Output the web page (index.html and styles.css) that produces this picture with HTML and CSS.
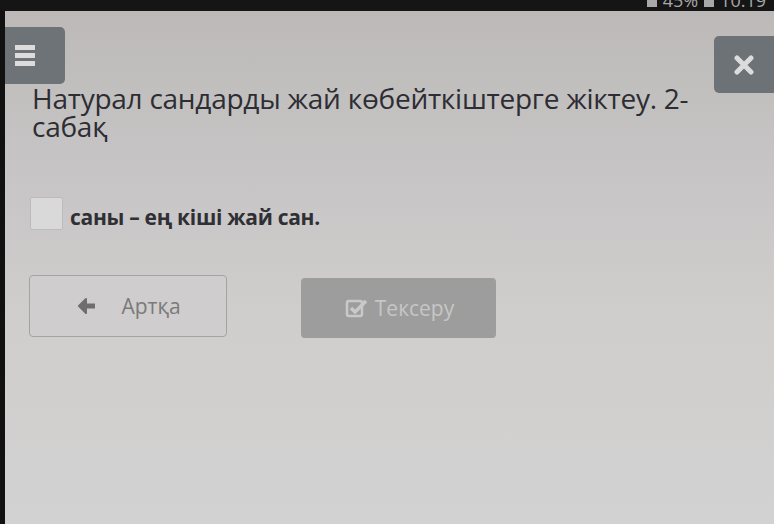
FILE: index.html
```html
<!DOCTYPE html>
<html lang="kk">
<head>
<meta charset="utf-8">
<link rel="stylesheet" href="styles.css">
</head>
<body>
<div class="status"><span class="status-text"><span class="bat"></span> 45% <span class="bat"></span> 10:19</span></div>
<div class="screen">
  <div class="topbar">
    <button class="menu-btn" aria-label="menu">
      <svg width="20" height="22" viewBox="0 0 20 22"><rect x="0" y="0" width="20" height="5" fill="#dcdcdc"/><rect x="0" y="8" width="20" height="5" fill="#dcdcdc"/><rect x="0" y="16" width="20" height="5" fill="#dcdcdc"/></svg>
    </button>
    <button class="close-btn" aria-label="close">
      <svg width="20" height="20" viewBox="0 0 20 20"><path d="M3 3 L17 17 M17 3 L3 17" stroke="#dcdcdc" stroke-width="5" stroke-linecap="round"/></svg>
    </button>
  </div>
  <h1 class="title">Натурал сандарды жай көбейткіштерге жіктеу. 2-<br>сабақ</h1>
  <div class="question">
    <span class="box"></span>
    <span class="q-text">саны – ең кіші жай сан.</span>
  </div>
  <div class="actions">
    <button class="btn back">
      <svg width="20" height="16" viewBox="0 0 20 16"><path d="M9 1 L2 8 L9 15 Z" fill="#6e6e6e" stroke="#6e6e6e" stroke-width="2" stroke-linejoin="round"/><path d="M6 8 H18" stroke="#6e6e6e" stroke-width="5"/></svg>
      <span>Артқа</span>
    </button>
    <button class="btn check">
      <svg width="24" height="20" viewBox="0 0 24 20"><rect x="2" y="3" width="15" height="15" rx="2" stroke="#c9c9c9" stroke-width="2.5" fill="none"/><path d="M6 10 L10 14 L21 3" stroke="#c9c9c9" stroke-width="3.5" fill="none"/></svg>
      <span>Тексеру</span>
    </button>
  </div>
</div>
</body>
</html>
```
FILE: styles.css
```css
html, body { margin: 0; padding: 0; }
body {
  width: 774px;
  height: 524px;
  overflow: hidden;
  background: #111;
  font-family: "Open Sans", "Noto Sans", sans-serif;
  position: relative;
}
.status {
  height: 11px;
  background: #151515;
  position: relative;
  overflow: hidden;
}
.status-text {
  position: absolute;
  right: 8px;
  top: -10px;
  color: #a8a8a8;
  font-size: 18px;
  line-height: 20px;
  display: flex;
  align-items: center;
  gap: 6px;
}
.bat {
  display: inline-block;
  width: 10px;
  height: 14px;
  background: #a8a8a8;
}
.screen {
  margin-left: 5px;
  height: 513px;
  background: linear-gradient(180deg, #bdb9b9 0%, #c6c4c4 30%, #cfcecd 60%, #d3d2d2 100%);
  display: flex;
  flex-direction: column;
}
.topbar {
  display: flex;
  justify-content: space-between;
  align-items: flex-start;
}
.menu-btn {
  margin-top: 16px;
  width: 60px;
  height: 57px;
  border: 0;
  background: #6e7378;
  border-radius: 0 5px 5px 0;
  display: flex;
  align-items: center;
  padding: 0 0 0 10px;
}
.close-btn {
  margin-top: 25px;
  width: 60px;
  height: 57px;
  border: 0;
  background: #6d7277;
  border-radius: 5px 0 0 5px;
  display: flex;
  align-items: center;
  justify-content: center;
  padding: 0;
}
.title {
  margin: -9px 0 0 27px;
  font-weight: 400;
  font-size: 28px;
  line-height: 28px;
  color: #2d2d33;
  letter-spacing: -0.25px;
}
.question {
  display: flex;
  align-items: center;
  gap: 7px;
  margin: 55px 0 0 25px;
}
.box {
  width: 31px;
  height: 31px;
  border: 1px solid #bcbcbc;
  background: #d9d9d9;
  border-radius: 2px;
}
.q-text {
  font-weight: 700;
  font-size: 21px;
  color: #2f2f35;
  letter-spacing: -0.3px;
  margin-top: 8px;
}
.actions {
  display: flex;
  gap: 74px;
  margin: 44px 0 0 24px;
  align-items: flex-start;
}
.btn {
  font-family: inherit;
  display: flex;
  align-items: center;
  justify-content: center;
  font-size: 21px;
  border-radius: 4px;
}
.back {
  width: 198px;
  height: 62px;
  border: 1.5px solid #a3a3a3;
  background: #cfcdcd;
  color: #7a7a7a;
  gap: 24px;
  padding-right: 4px;
}
.check {
  margin-top: 3px;
  width: 195px;
  height: 60px;
  border: 0;
  background: #9d9d9d;
  color: #c6c6c6;
  gap: 6px;
  padding-right: 4px;
}
```
